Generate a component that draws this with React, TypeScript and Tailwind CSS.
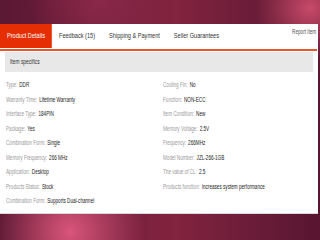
import React from "react";

const left: [string, string][] = [
  ["Type:", "DDR"],
  ["Warranty Time:", "Lifetime Warranty"],
  ["Interface Type:", "184PIN"],
  ["Package:", "Yes"],
  ["Combination Form:", "Single"],
  ["Memory Frequency:", "266 MHz"],
  ["Application:", "Desktop"],
  ["Products Status:", "Stock"],
  ["Combination Form:", "Supports Dual-channel"],
];

const right: [string, string][] = [
  ["Cooling Fin:", "No"],
  ["Function:", "NON-ECC"],
  ["Item Condition:", "New"],
  ["Memory Voltage:", "2.5V"],
  ["Frequency:", "266MHz"],
  ["Model Number:", "JZL-266-1GB"],
  ["The value of CL:", "2.5"],
  ["Products function:", "increases system performance"],
];

function Row({ l, v }: { l: string; v: string }) {
  return (
    <div className="h-[14.5px] flex items-center whitespace-nowrap">
      <span className="text-[#9a9a9a]">{l}</span>
      <span className="text-[#222] ml-[3px]">{v}</span>
    </div>
  );
}

export default function App() {
  return (
    <div
      className="w-[320px] h-[240px] overflow-hidden flex flex-col bg-[radial-gradient(circle_at_70px_232px,#d9557a_0,transparent_75px),radial-gradient(circle_at_310px_8px,#c84a68_0,transparent_55px),radial-gradient(circle_at_100px_0px,#8a2848_0,transparent_70px),linear-gradient(90deg,#5a1832,#74203e_35%,#82233f_55%,#6a1c38_80%,#581530)]"
      style={{ fontFamily: '"Liberation Sans", Arial, sans-serif' }}
    >
      <div className="h-[24px] shrink-0" />
      <div className="w-[318px] h-[189px] bg-white overflow-hidden flex flex-col shadow-[0_1px_0_#d8d8d8]">
        <div className="h-[24px] flex items-stretch text-[#333]">
          <div className="w-[292px] shrink-0 flex items-stretch">
            <div className="flex items-stretch text-[8px] origin-left scale-x-[0.7] whitespace-nowrap">
              <div className="px-[10px] flex items-center bg-[#e62e04] text-white">Product Details</div>
              <div className="px-[10px] flex items-center">Feedback (15)</div>
              <div className="px-[10px] flex items-center">Shipping &amp; Payment</div>
              <div className="px-[10px] flex items-center">Seller Guarantees</div>
            </div>
          </div>
          <div className="w-[26px] shrink-0 pt-[3px] text-[6.5px] text-[#555] whitespace-nowrap">
            <div className="origin-left scale-x-[0.72]">Report item</div>
          </div>
        </div>
        <div className="h-[1px]" />
        <div className="h-[2px] bg-[#e8582c] mr-[1px]" />
        <div className="h-[1px]" />
        <div className="mx-[5px] h-[20px] bg-[#e8e8e8] flex items-center pl-[5px] text-[7px] text-[#333]">
          <div className="origin-left scale-x-[0.7] whitespace-nowrap">Item specifics</div>
        </div>
        <div className="flex pt-[6px] text-[7px]">
          <div className="w-[163px] pl-[6px]">
            <div className="flex flex-col origin-left scale-x-[0.66]">
              {left.map(([l, v], i) => (
                <Row key={i} l={l} v={v} />
              ))}
            </div>
          </div>
          <div className="flex-1">
            <div className="flex flex-col origin-left scale-x-[0.66]">
              {right.map(([l, v], i) => (
                <Row key={i} l={l} v={v} />
              ))}
            </div>
          </div>
        </div>
      </div>
    </div>
  );
}
